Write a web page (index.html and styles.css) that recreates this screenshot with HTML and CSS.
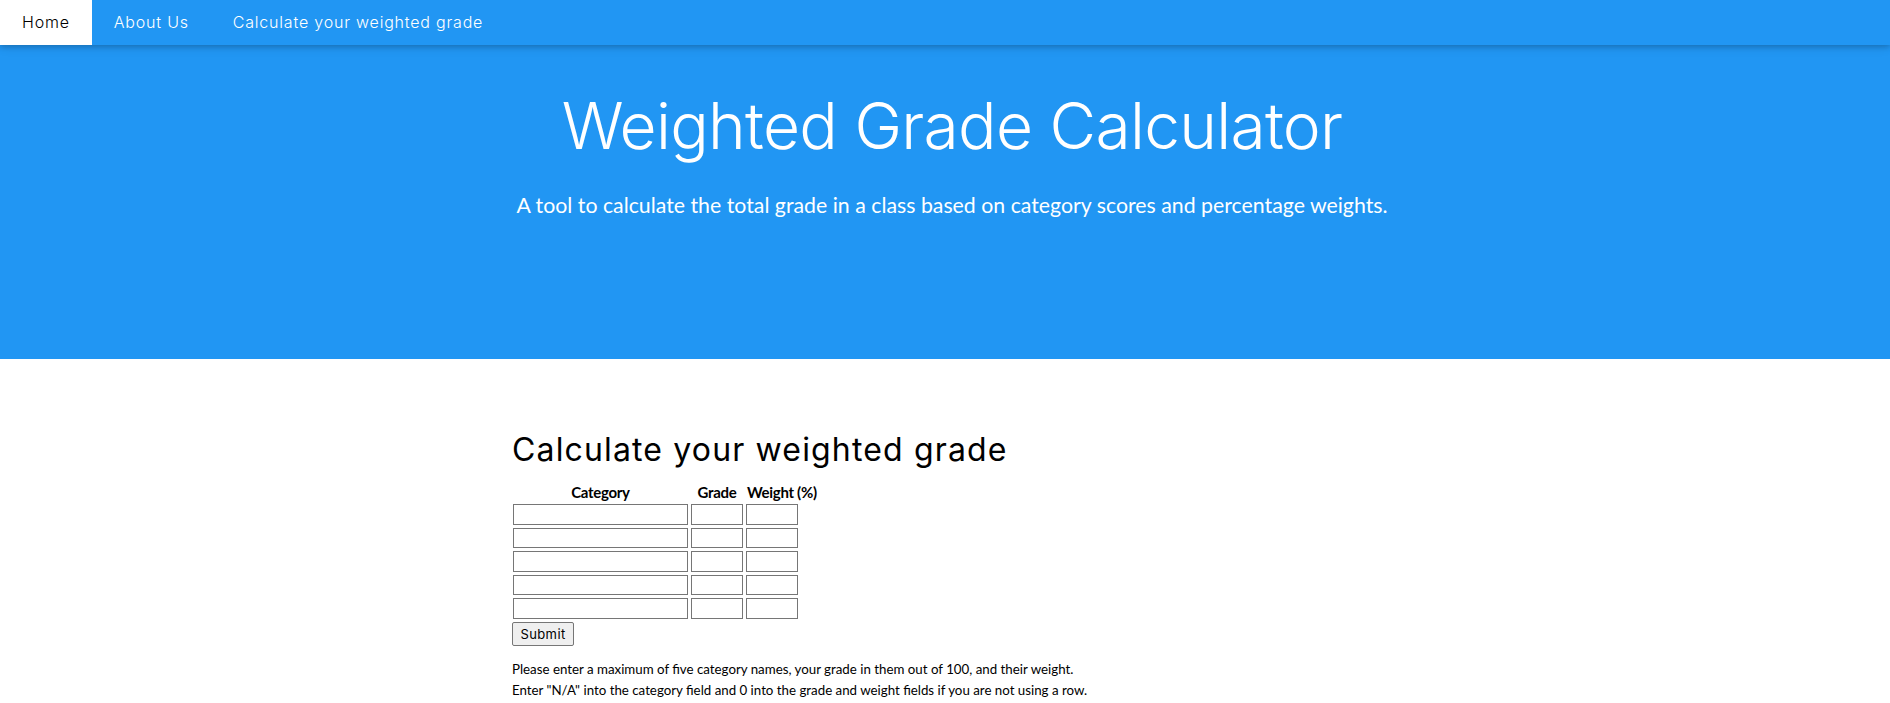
FILE: index.html
```html
<!DOCTYPE html>
<html lang="en">
<head>
<meta charset="utf-8">
<title>Weighted Grade Calculator</title>
<link rel="stylesheet" href="styles.css">
</head>
<body>
<nav class="topbar">
  <a class="nav-item active" href="#">Home</a>
  <a class="nav-item" href="#">About Us</a>
  <a class="nav-item" href="#">Calculate your weighted grade</a>
</nav>
<header class="hero">
  <h1 class="hero-title">Weighted Grade Calculator</h1>
  <p class="hero-sub">A tool to calculate the total grade in a class based on category scores and percentage weights.</p>
</header>
<main class="content">
  <h2 class="section-title">Calculate your weighted grade</h2>
  <form class="grade-form">
    <table class="grade-table">
      <thead>
        <tr><th>Category</th><th>Grade</th><th>Weight (%)</th></tr>
      </thead>
      <tbody>
        <tr><td><input class="in-cat" type="text"></td><td><input class="in-num" type="text"></td><td><input class="in-num" type="text"></td></tr>
        <tr><td><input class="in-cat" type="text"></td><td><input class="in-num" type="text"></td><td><input class="in-num" type="text"></td></tr>
        <tr><td><input class="in-cat" type="text"></td><td><input class="in-num" type="text"></td><td><input class="in-num" type="text"></td></tr>
        <tr><td><input class="in-cat" type="text"></td><td><input class="in-num" type="text"></td><td><input class="in-num" type="text"></td></tr>
        <tr><td><input class="in-cat" type="text"></td><td><input class="in-num" type="text"></td><td><input class="in-num" type="text"></td></tr>
      </tbody>
    </table>
    <button class="submit-btn" type="button">Submit</button>
  </form>
  <p class="note">Please enter a maximum of five category names, your grade in them out of 100, and their weight.<br>Enter "N/A" into the category field and 0 into the grade and weight fields if you are not using a row.</p>
</main>
</body>
</html>
```
FILE: styles.css
```css
html, body {
  margin: 0;
  padding: 0;
  background: #fff;
  font-family: Lato, "Open Sans", sans-serif;
  font-size: 15px;
  color: #000;
}

.topbar {
  display: flex;
  height: 45px;
  background: #2196F3;
  box-shadow: 0 2px 5px 0 rgba(0,0,0,0.16), 0 2px 10px 0 rgba(0,0,0,0.12);
  position: relative;
  z-index: 2;
}

.nav-item {
  display: block;
  padding: 0 22px;
  line-height: 45px;
  font-family: Inter, "Noto Sans", sans-serif;
  font-weight: 300;
  font-size: 16px;
  letter-spacing: 0.8px;
  color: #fff;
  text-decoration: none;
}

.nav-item.active {
  background: #fff;
  color: #000;
}

.hero {
  height: 314px;
  box-sizing: border-box;
  background: #2196F3;
  color: #fff;
  text-align: center;
  padding: 43px 16px 0 30px;
}

.hero-title {
  margin: 0;
  font-family: Inter, "Noto Sans", sans-serif;
  font-weight: 300;
  font-size: 64px;
  line-height: 1.2;
  letter-spacing: -0.7px;
}

.hero-sub {
  margin: 25px 0 0;
  font-family: Lato, sans-serif;
  font-size: 21.3px;
  line-height: 30px;
}

.content {
  max-width: 866px;
  margin: 0 auto;
  padding-top: 72px;
}

.section-title {
  margin: 0;
  font-family: Inter, "Noto Sans", sans-serif;
  font-weight: 400;
  font-size: 32px;
  line-height: 1.2;
  letter-spacing: 1.15px;
}

.grade-table {
  margin-top: 12px;
  border-collapse: separate;
  border-spacing: 3px 3px;
  margin-left: -2px;
}

.grade-table th {
  padding: 0 1px;
  font-family: Lato, sans-serif;
  font-weight: 700;
  font-size: 15px;
  line-height: 17px;
  letter-spacing: -0.3px;
}

.grade-table td {
  padding: 0;
  text-align: left;
}

.grade-table input {
  display: block;
  box-sizing: border-box;
  height: 20.5px;
  margin: 0;
  padding: 1px 2px;
  border: 1px solid #767676;
  background: #fff;
  font-size: 13px;
}

.in-cat {
  width: 175px;
}

.in-num {
  width: 52px;
}

.submit-btn {
  display: block;
  margin-top: 0;
  width: 62px;
  height: 24px;
  padding: 0;
  box-sizing: border-box;
  background: #efefef;
  border: 1px solid #767676;
  border-radius: 2px;
  font-family: Inter, "Noto Sans", sans-serif;
  font-size: 13px;
  letter-spacing: 0.4px;
  color: #000;
}

.note {
  margin: 13px 0 0;
  font-family: Lato, sans-serif;
  font-size: 13.3px;
  line-height: 21px;
}
```
